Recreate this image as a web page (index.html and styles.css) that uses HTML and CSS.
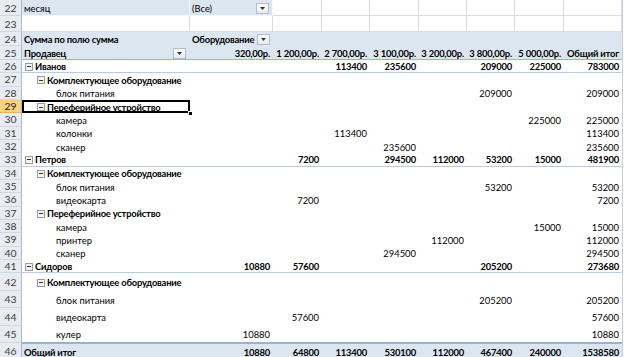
FILE: index.html
```html
<!DOCTYPE html>
<html lang="ru">
<head>
<meta charset="utf-8">
<link rel="stylesheet" href="styles.css">
</head>
<body>
<div class="sheet">
  <div class="row r16 top">
    <div class="rh">22</div>
    <div class="c blue">месяц</div>
    <div class="c blue flt">(Все)<span class="dd"><svg width="5" height="3" viewBox="0 0 5 3"><path d="M0 0h5L2.5 3z" fill="#333"/></svg></span></div>
    <div class="c"></div><div class="c"></div><div class="c"></div><div class="c"></div><div class="c"></div><div class="c"></div><div class="c"></div>
    <div class="edge"></div>
  </div>
  <div class="row r16 top">
    <div class="rh">23</div>
    <div class="c"></div><div class="c"></div>
    <div class="c"></div><div class="c"></div><div class="c"></div><div class="c"></div><div class="c"></div><div class="c"></div><div class="c"></div>
    <div class="edge"></div>
  </div>
  <div class="row r14 hdr">
    <div class="rh">24</div>
    <div class="c bold">Сумма по полю сумма</div>
    <div class="c bold flt">Оборудование<span class="dd"><svg width="5" height="3" viewBox="0 0 5 3"><path d="M0 0h5L2.5 3z" fill="#333"/></svg></span></div>
    <div class="c"></div><div class="c"></div><div class="c"></div><div class="c"></div><div class="c"></div><div class="c"></div><div class="c"></div>
    <div class="edge"></div>
  </div>
  <div class="row r14 hdr sepd">
    <div class="rh">25</div>
    <div class="c bold flt2">Продавец<span class="dd"><svg width="5" height="3" viewBox="0 0 5 3"><path d="M0 0h5L2.5 3z" fill="#333"/></svg></span></div>
    <div class="c n bold">320,00р.</div>
    <div class="c n bold">1 200,00р.</div>
    <div class="c n bold">2 700,00р.</div>
    <div class="c n bold">3 100,00р.</div>
    <div class="c n bold">3 200,00р.</div>
    <div class="c n bold">3 800,00р.</div>
    <div class="c n bold">5 000,00р.</div>
    <div class="c n bold">Общий итог</div>
    <div class="edge"></div>
  </div>

  <div class="row rs sep bold">
    <div class="rh">26</div>
    <div class="c l1"><span class="ex"></span>Иванов</div>
    <div class="c n"></div><div class="c n"></div><div class="c n">113400</div><div class="c n">235600</div><div class="c n"></div><div class="c n">209000</div><div class="c n">225000</div><div class="c n">783000</div>
    <div class="edge"></div>
  </div>
  <div class="row rs">
    <div class="rh">27</div>
    <div class="c l2 bold"><span class="ex"></span>Комплектующее оборудование</div>
    <div class="c"></div><div class="c"></div><div class="c"></div><div class="c"></div><div class="c"></div><div class="c"></div><div class="c"></div><div class="c"></div>
    <div class="edge"></div>
  </div>
  <div class="row rs">
    <div class="rh">28</div>
    <div class="c l3">блок питания</div>
    <div class="c n"></div><div class="c n"></div><div class="c n"></div><div class="c n"></div><div class="c n"></div><div class="c n">209000</div><div class="c n"></div><div class="c n">209000</div>
    <div class="edge"></div>
  </div>
  <div class="row rs">
    <div class="rh sel">29</div>
    <div class="c l2 bold active"><span class="ex"></span>Переферийное устройство<span class="handle"></span></div>
    <div class="c"></div><div class="c"></div><div class="c"></div><div class="c"></div><div class="c"></div><div class="c"></div><div class="c"></div><div class="c"></div>
    <div class="edge"></div>
  </div>
  <div class="row rs">
    <div class="rh">30</div>
    <div class="c l3">камера</div>
    <div class="c n"></div><div class="c n"></div><div class="c n"></div><div class="c n"></div><div class="c n"></div><div class="c n"></div><div class="c n">225000</div><div class="c n">225000</div>
    <div class="edge"></div>
  </div>
  <div class="row rs">
    <div class="rh">31</div>
    <div class="c l3">колонки</div>
    <div class="c n"></div><div class="c n"></div><div class="c n">113400</div><div class="c n"></div><div class="c n"></div><div class="c n"></div><div class="c n"></div><div class="c n">113400</div>
    <div class="edge"></div>
  </div>
  <div class="row rs">
    <div class="rh">32</div>
    <div class="c l3">сканер</div>
    <div class="c n"></div><div class="c n"></div><div class="c n"></div><div class="c n">235600</div><div class="c n"></div><div class="c n"></div><div class="c n"></div><div class="c n">235600</div>
    <div class="edge"></div>
  </div>
  <div class="row rs sep bold">
    <div class="rh">33</div>
    <div class="c l1"><span class="ex"></span>Петров</div>
    <div class="c n"></div><div class="c n">7200</div><div class="c n"></div><div class="c n">294500</div><div class="c n">112000</div><div class="c n">53200</div><div class="c n">15000</div><div class="c n">481900</div>
    <div class="edge"></div>
  </div>
  <div class="row rs">
    <div class="rh">34</div>
    <div class="c l2 bold"><span class="ex"></span>Комплектующее оборудование</div>
    <div class="c"></div><div class="c"></div><div class="c"></div><div class="c"></div><div class="c"></div><div class="c"></div><div class="c"></div><div class="c"></div>
    <div class="edge"></div>
  </div>
  <div class="row rs">
    <div class="rh">35</div>
    <div class="c l3">блок питания</div>
    <div class="c n"></div><div class="c n"></div><div class="c n"></div><div class="c n"></div><div class="c n"></div><div class="c n">53200</div><div class="c n"></div><div class="c n">53200</div>
    <div class="edge"></div>
  </div>
  <div class="row rs">
    <div class="rh">36</div>
    <div class="c l3">видеокарта</div>
    <div class="c n"></div><div class="c n">7200</div><div class="c n"></div><div class="c n"></div><div class="c n"></div><div class="c n"></div><div class="c n"></div><div class="c n">7200</div>
    <div class="edge"></div>
  </div>
  <div class="row rs">
    <div class="rh">37</div>
    <div class="c l2 bold"><span class="ex"></span>Переферийное устройство</div>
    <div class="c"></div><div class="c"></div><div class="c"></div><div class="c"></div><div class="c"></div><div class="c"></div><div class="c"></div><div class="c"></div>
    <div class="edge"></div>
  </div>
  <div class="row rs">
    <div class="rh">38</div>
    <div class="c l3">камера</div>
    <div class="c n"></div><div class="c n"></div><div class="c n"></div><div class="c n"></div><div class="c n"></div><div class="c n"></div><div class="c n">15000</div><div class="c n">15000</div>
    <div class="edge"></div>
  </div>
  <div class="row rs">
    <div class="rh">39</div>
    <div class="c l3">принтер</div>
    <div class="c n"></div><div class="c n"></div><div class="c n"></div><div class="c n"></div><div class="c n">112000</div><div class="c n"></div><div class="c n"></div><div class="c n">112000</div>
    <div class="edge"></div>
  </div>
  <div class="row rs">
    <div class="rh">40</div>
    <div class="c l3">сканер</div>
    <div class="c n"></div><div class="c n"></div><div class="c n"></div><div class="c n">294500</div><div class="c n"></div><div class="c n"></div><div class="c n"></div><div class="c n">294500</div>
    <div class="edge"></div>
  </div>
  <div class="row rs sep bold">
    <div class="rh">41</div>
    <div class="c l1"><span class="ex"></span>Сидоров</div>
    <div class="c n">10880</div><div class="c n">57600</div><div class="c n"></div><div class="c n"></div><div class="c n"></div><div class="c n">205200</div><div class="c n"></div><div class="c n">273680</div>
    <div class="edge"></div>
  </div>
  <div class="row rt">
    <div class="rh">42</div>
    <div class="c l2 bold"><span class="ex"></span>Комплектующее оборудование</div>
    <div class="c"></div><div class="c"></div><div class="c"></div><div class="c"></div><div class="c"></div><div class="c"></div><div class="c"></div><div class="c"></div>
    <div class="edge"></div>
  </div>
  <div class="row rt">
    <div class="rh">43</div>
    <div class="c l3">блок питания</div>
    <div class="c n"></div><div class="c n"></div><div class="c n"></div><div class="c n"></div><div class="c n"></div><div class="c n">205200</div><div class="c n"></div><div class="c n">205200</div>
    <div class="edge"></div>
  </div>
  <div class="row rt">
    <div class="rh">44</div>
    <div class="c l3">видеокарта</div>
    <div class="c n"></div><div class="c n">57600</div><div class="c n"></div><div class="c n"></div><div class="c n"></div><div class="c n"></div><div class="c n"></div><div class="c n">57600</div>
    <div class="edge"></div>
  </div>
  <div class="row rt sepd">
    <div class="rh">45</div>
    <div class="c l3">кулер</div>
    <div class="c n">10880</div><div class="c n"></div><div class="c n"></div><div class="c n"></div><div class="c n"></div><div class="c n"></div><div class="c n"></div><div class="c n">10880</div>
    <div class="edge"></div>
  </div>
  <div class="row r16 total bold">
    <div class="rh">46</div>
    <div class="c">Общий итог</div>
    <div class="c n">10880</div><div class="c n">64800</div><div class="c n">113400</div><div class="c n">530100</div><div class="c n">112000</div><div class="c n">467400</div><div class="c n">240000</div><div class="c n">1538580</div>
    <div class="edge"></div>
  </div>
</div>
</body>
</html>
```

FILE: styles.css
```css
* { box-sizing: border-box; margin: 0; padding: 0; }
html, body { margin: 0; background: #ffffff; }
body {
  width: 624px;
  height: 357px;
  overflow: hidden;
  font-family: Lato, "Open Sans", "Liberation Sans", sans-serif;
  font-size: 9.4px;
  color: #000;
}
.sheet { display: flex; flex-direction: column; }
.row {
  display: grid;
  grid-template-columns: 22px 168px 83px 49px 48px 49px 48px 48px 49px 58px 2px;
}
.r16 { height: 16px; }
.r14 { height: 14px; }
.rs { height: 13.33px; }
.rt { height: 17.5px; }

.rh {
  background: #e8ecf2;
  border-right: 1px solid #a9b8ca;
  border-bottom: 1px solid #d0d8e2;
  color: #3b3b3b;
  font-size: 10.4px;
  font-weight: 400;
  letter-spacing: 0;
  display: flex;
  align-items: center;
  justify-content: center;
}
.rh.sel { background: #f7d37f; border-bottom-color: #e2b55a; color: #262626; }

.c {
  display: flex;
  align-items: center;
  white-space: nowrap;
  padding: 0 2px;
  position: relative;
  padding-top: 1px;
}
.n { justify-content: flex-end; padding-right: 3px; }
.bold { font-weight: 700; letter-spacing: -0.2px; }
.edge { border-left: 1px solid #c9ced6; }

.top > .c { border-right: 1px solid #d9dde3; border-bottom: 1px solid #d9dde3; }
.top > .c.blue { background: #dce6f1; border-right-color: #f4f7fb; border-bottom-color: #f4f7fb; }
.flt { padding-right: 3px; }
.flt .dd, .flt2 .dd { margin-left: auto; }
.flt2 { padding-right: 4px; }

.dd {
  width: 13px;
  height: 11px;
  border: 1px solid #b4bcc6;
  background: linear-gradient(#ffffff, #e6eaef);
  display: inline-flex;
  align-items: center;
  justify-content: center;
  flex: none;
}

.hdr > .c { background: #dce6f1; }
.sepd > .c { border-bottom: 1px solid #95b3d7; }
.sep > .c { border-bottom: 1px solid #b8cce4; }
.total > .c { background: #dce6f1; }
.total > .c:not(.rh) { border-top: 1px solid #95b3d7; }

.l1 { padding-left: 3px; }
.l2 { padding-left: 15px; }
.l3 { padding-left: 34px; }

.ex {
  width: 8px;
  height: 8px;
  border: 1px solid #9a9a9a;
  background: #f4f4f4;
  margin-right: 2px;
  position: relative;
  flex: none;
}
.ex::after {
  content: "";
  position: absolute;
  left: 1px;
  right: 1px;
  top: 2.5px;
  height: 1px;
  background: #333;
}

.active { box-shadow: inset 0 0 0 2px #000; }
.handle {
  position: absolute;
  right: -3px;
  bottom: -3px;
  width: 5px;
  height: 5px;
  background: #000;
  border: 1px solid #fff;
}
```
